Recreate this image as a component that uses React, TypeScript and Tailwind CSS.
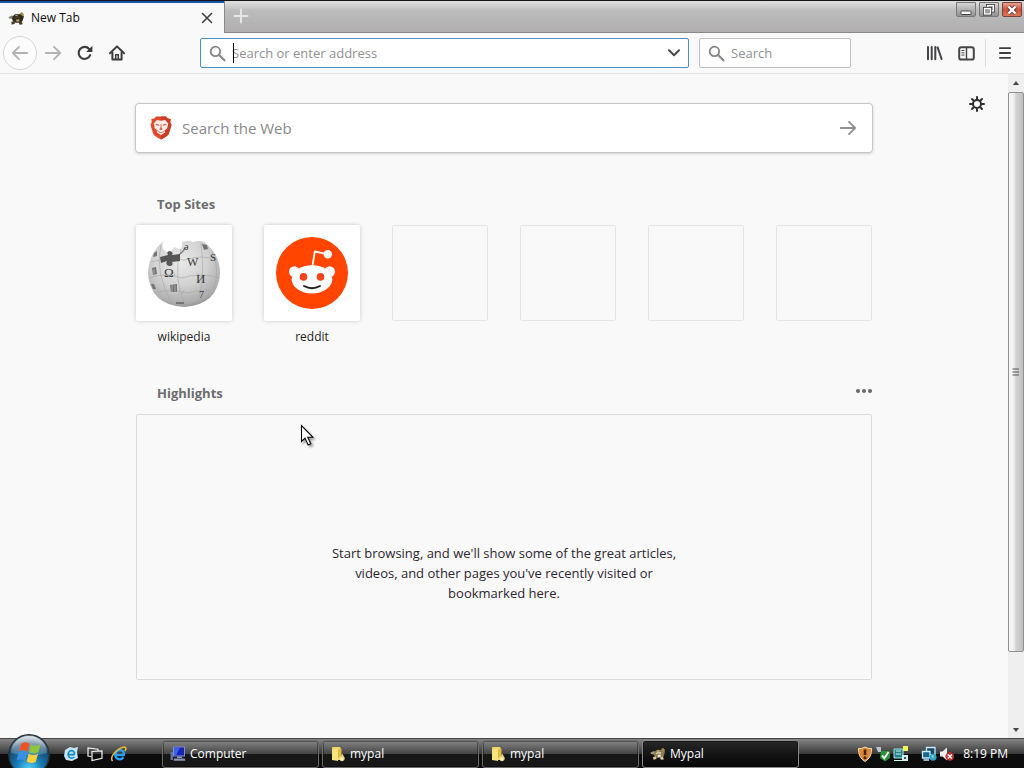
import React from "react";

const EMPTY_SITES = ["slot-3", "slot-4", "slot-5", "slot-6"];

function MypalIcon({ className, light = false }: { className: string; light?: boolean }) {
  const body = light ? "#d8cba4" : "#4a3f22";
  const shell = light ? "#8b7c58" : "#2b2a1c";
  return (
    <svg className={className} viewBox="0 0 16 14" aria-hidden="true">
      <path d="M0.5 5.5 L4 4 L6 6 L4 7.5 L1 7 Z" fill={light ? "#a89a78" : "#7d8b6d"} />
      <path d="M4 6 Q6 2 10 3 Q14 2 15 5 L13.5 9.5 Q10 12 6 10.5 Q3.5 9 4 6Z" fill={shell} />
      <path d="M5.5 6.5 Q8 3.5 11.5 5.5 L10.5 7 Q8 5.8 6.8 7.4Z" fill={body} />
      <path d="M11 2.5 L13 0.8 L15 3 L14 5 Z" fill="#a08a45" />
      <path d="M7.6 8 L10.5 7.6 L11 9.6 L8 10Z" fill={light ? "#f3edd6" : "#b7a568"} />
      <path d="M3 10 L6 9.5 L6.5 12 L3.5 12.8Z M10 10.5 L13 9.5 L13.8 12.4 L10.8 12.8Z" fill={body} />
      <path d="M7 4.2 L9.2 3.8" stroke="#e6dcae" strokeWidth="0.8" />
    </svg>
  );
}

function Magnifier({ className }: { className: string }) {
  return (
    <svg className={className} viewBox="0 0 18 18" fill="none" stroke="currentColor" aria-hidden="true">
      <circle cx="6.8" cy="6.8" r="5" strokeWidth="1.9" />
      <path d="M10.6 10.6 L16.4 16.2" strokeWidth="2.2" strokeLinecap="round" />
    </svg>
  );
}

function Arrow({ className, flip = false }: { className: string; flip?: boolean }) {
  return (
    <svg className={className} viewBox="0 0 18 16" fill="none" stroke="currentColor" strokeWidth="1.9" strokeLinecap="round" strokeLinejoin="round" aria-hidden="true">
      {flip ? <path d="M16.2 8 H2 M8 1.8 L1.8 8 L8 14.2" /> : <path d="M1.8 8 H16 M10 1.8 L16.2 8 L10 14.2" />}
    </svg>
  );
}

function TabStrip() {
  return (
    <header className="flex h-[33px] border-t border-[#141414] bg-linear-to-b from-[#dcdcdc] from-5% via-[#bcbcbc] via-30% to-[#b0aeae]">
      <div className="flex w-56 items-center border-t-2 border-[#1b56a8] bg-[#f9f9fa] pr-[7px] pl-2">
        <MypalIcon className="h-[15px] w-[17px]" />
        <span className="ml-1.5 flex-1 text-xs text-[#0c0c0d]">New Tab</span>
        <button aria-label="Close tab" className="flex size-5 items-center justify-center text-[#3c3c3c]">
          <svg className="size-3" viewBox="0 0 12 12" stroke="currentColor" strokeWidth="1.5" strokeLinecap="round" aria-hidden="true">
            <path d="M1.5 1.5 L10.5 10.5 M10.5 1.5 L1.5 10.5" />
          </svg>
        </button>
      </div>
      <div className="flex flex-1 justify-between border-b border-l border-b-[#8a8888] border-l-[#8a8888]">
        <button aria-label="Open a new tab" className="flex h-[30px] w-8 items-center justify-center text-[#e6e6e6]">
          <svg className="size-4" viewBox="0 0 16 16" stroke="currentColor" strokeWidth="2" strokeLinecap="round" aria-hidden="true">
            <path d="M8 1.5 V14.5 M1.5 8 H14.5" />
          </svg>
        </button>
        <div className="flex gap-[3px] pt-px pr-0.5">
          <button aria-label="Minimize" className="flex h-[15px] w-5 items-center justify-center rounded-b-xs border border-[#777] bg-linear-to-b from-[#d5d5d5] to-[#929292]">
            <svg className="h-3 w-4" viewBox="0 0 16 12" aria-hidden="true">
              <rect x="3" y="7" width="10" height="3.5" rx="0.6" fill="#fff" stroke="#454545" />
            </svg>
          </button>
          <button aria-label="Restore" className="flex h-[15px] w-5 items-center justify-center rounded-b-xs border border-[#777] bg-linear-to-b from-[#d5d5d5] to-[#929292]">
            <svg className="h-3 w-4" viewBox="0 0 16 12" fill="#999" aria-hidden="true">
              <rect x="6.5" y="1.5" width="6" height="5.5" stroke="#3f3f3f" strokeWidth="3" />
              <rect x="6.5" y="1.5" width="6" height="5.5" stroke="#fff" strokeWidth="1.3" />
              <rect x="3.5" y="4.5" width="6" height="5.5" stroke="#3f3f3f" strokeWidth="3" />
              <rect x="3.5" y="4.5" width="6" height="5.5" stroke="#fff" strokeWidth="1.3" />
            </svg>
          </button>
          <button aria-label="Close" className="flex h-[15px] w-5 items-center justify-center rounded-b-xs border border-[#7d4038] bg-linear-to-b from-[#e5a294] via-[#cf4f38] via-50% to-[#d9765c]">
            <svg className="h-3 w-4" viewBox="0 0 16 12" aria-hidden="true">
              <path d="M4.5 2.5 L11.5 9.5 M11.5 2.5 L4.5 9.5" stroke="#5d3b38" strokeWidth="4" />
              <path d="M4.5 2.5 L11.5 9.5 M11.5 2.5 L4.5 9.5" stroke="#fff" strokeWidth="2.4" />
            </svg>
          </button>
        </div>
      </div>
    </header>
  );
}

function NavBar() {
  return (
    <nav className="flex h-[41px] items-center border-b border-[#e3e3e5] bg-[#f9f9fa]">
      <button aria-label="Back" className="ml-[3px] flex size-[34px] items-center justify-center rounded-full border border-[#d5d5d7] bg-[#fcfcfc] text-[#b3b3b5]">
        <Arrow flip className="h-4 w-[18px]" />
      </button>
      <button aria-label="Forward" className="flex size-8 items-center justify-center text-[#b3b3b5]">
        <Arrow className="h-4 w-[18px]" />
      </button>
      <button aria-label="Reload" className="flex size-8 items-center justify-center text-[#3d3d40]">
        <svg className="size-4" viewBox="0 0 16 16" fill="none" aria-hidden="true">
          <path d="M13.2 10.2 A6 6 0 1 1 12.2 4" stroke="currentColor" strokeWidth="2.1" strokeLinecap="round" />
          <path d="M15.4 0.8 V6.4 Q15.4 7 14.8 7 H9.2 Z" fill="currentColor" />
        </svg>
      </button>
      <button aria-label="Home" className="flex size-8 items-center justify-center text-[#3d3d40]">
        <svg className="size-4" viewBox="0 0 16 16" fill="none" stroke="currentColor" strokeWidth="2" strokeLinecap="round" strokeLinejoin="round" aria-hidden="true">
          <path d="M1 8.2 L8 1.4 L15 8.2" />
          <path d="M3.4 7.5 V14.6 H12.6 V7.5" />
          <path d="M6.7 14 V9.7 H9.3 V14" strokeWidth="1.5" />
        </svg>
      </button>
      <div className="ml-[67px] flex h-[30px] flex-1 items-center rounded-xs border border-[#4a90c8] bg-white">
        <Magnifier className="ml-2 size-[17px] text-[#858585]" />
        <div className="relative ml-1.5 flex h-full flex-1 items-center">
          <span className="absolute top-1 left-px h-5 w-px bg-black" aria-hidden="true" />
          <input aria-label="Search or enter address" placeholder="Search or enter address" className="w-full bg-transparent pt-0.5 text-[13px] outline-none placeholder:text-[#8f8f92]" />
        </div>
        <button aria-label="Show history" className="flex h-full w-7 items-center justify-center text-[#4a4a4c]">
          <svg className="h-2 w-3" viewBox="0 0 12 8" fill="none" stroke="currentColor" strokeWidth="2" strokeLinecap="round" strokeLinejoin="round" aria-hidden="true">
            <path d="M1 1.3 L6 6.3 L11 1.3" />
          </svg>
        </button>
      </div>
      <div className="mr-[67px] ml-2.5 flex h-[30px] w-38 items-center rounded-xs border border-[#bebec0] bg-white">
        <Magnifier className="ml-2 size-[17px] text-[#858585]" />
        <input aria-label="Search" placeholder="Search" className="ml-1.5 min-w-0 flex-1 bg-transparent pt-0.5 text-[13px] outline-none placeholder:text-[#8f8f92]" />
      </div>
      <button aria-label="Library" className="flex size-8 items-center justify-center text-[#454548]">
        <svg className="h-4 w-[17px]" viewBox="0 0 17 16" fill="none" stroke="currentColor" strokeWidth="2" strokeLinecap="round" aria-hidden="true">
          <path d="M2 2 V14.3 M5.7 2 V14.3 M9.3 2 V14.3 M11.6 2.4 L15.6 14" />
        </svg>
      </button>
      <button aria-label="Sidebars" className="flex size-8 items-center justify-center text-[#454548]">
        <svg className="h-[15px] w-[17px]" viewBox="0 0 17 15" fill="none" stroke="currentColor" strokeLinecap="round" aria-hidden="true">
          <rect x="1.2" y="1.2" width="14.6" height="12.4" rx="2.2" strokeWidth="2" />
          <path d="M8.5 1.5 V13.5" strokeWidth="1.4" />
          <path d="M3.8 4.5 H6 M3.8 6.8 H6 M3.8 9 H6" strokeWidth="1.1" />
        </svg>
      </button>
      <div className="ml-[3px] h-7 w-px bg-[#dcdcde]" />
      <button aria-label="Open menu" className="flex h-8 w-[38px] items-center justify-center text-[#3d3d40]">
        <svg className="size-3" viewBox="0 0 12 12" stroke="currentColor" strokeWidth="1.8" strokeLinecap="round" aria-hidden="true">
          <path d="M0.9 1.2 H11.1 M0.9 6 H11.1 M0.9 10.8 H11.1" />
        </svg>
      </button>
    </nav>
  );
}

function BraveIcon() {
  return (
    <svg className="h-6 w-[22px]" viewBox="0 0 20 24" preserveAspectRatio="none" aria-hidden="true">
      <path d="M5.5 0.5 H14.5 L16.2 2.4 L18.8 3 L18.4 6.3 L19.5 9 L17 18.3 Q15.8 20.3 10 23.6 Q4.2 20.3 3 18.3 L0.5 9 L1.6 6.3 L1.2 3 L3.8 2.4Z" fill="#e2492a" />
      <path d="M10 0.5 H14.5 L16.2 2.4 L18.8 3 L18.4 6.3 L19.5 9 L17 18.3 Q15.8 20.3 10 23.6Z" fill="#cc3d27" />
      <path d="M6.2 4 L10 4.7 L13.8 4 L16.6 7.4 L15.6 12.6 L13 14.6 L13.8 16.6 L10 19 L6.2 16.6 L7 14.6 L4.4 12.6 L3.4 7.4Z" fill="#ffeee8" />
      <path d="M4.8 7.7 L8.4 8.5 L8 9.7 L5.3 9Z M15.2 7.7 L11.6 8.5 L12 9.7 L14.7 9Z M8.2 13 L10 14.2 L11.8 13 L10.6 12.2 L10.3 8 H9.7 L9.4 12.2Z" fill="#c9604c" />
      <path d="M7.4 15.5 L10 16.8 L12.6 15.5" fill="none" stroke="#b66b5c" strokeWidth="0.8" />
    </svg>
  );
}

function WikipediaLogo() {
  return (
    <svg className="size-[76px]" viewBox="0 0 76 76" aria-hidden="true">
      <defs>
        <radialGradient id="globe" cx="0.45" cy="0.3" r="0.75">
          <stop offset="0" stopColor="#e9e9e9" />
          <stop offset="0.5" stopColor="#d2d2d2" />
          <stop offset="0.85" stopColor="#adadad" />
          <stop offset="1" stopColor="#848484" />
        </radialGradient>
      </defs>
      <path d="M18 6 Q14 12 19 16 Q25 19 28 12 L33 14 Q37 14 36 7 Q43 5 47 7 Q53 5 58 7 Q74 19 74 38 Q72 70 38 72 Q4 70 2 38 Q3 17 18 6Z" fill="url(#globe)" />
      <g fill="none" stroke="#a5a5a5" strokeWidth="0.6">
        <path d="M15 10 Q8 38 27 70 M35 14 Q26 43 40 72 M55 8 Q60 44 51 70 M66 17 Q75 37 67 55" />
        <path d="M5 27 Q22 22 38 25 Q58 19 71 25 M2 43 Q20 37 35 43 Q55 37 74 43 M8 58 Q26 53 42 58 Q58 54 68 56" />
        <path d="M24 39 q4 -4 5 2 M57 40 q-4 4 -5 -2 M33 57 q4 4 5 -2" />
      </g>
      <path d="M14 22 L22 20 Q20 16 24 16 Q28 17 26 20 L34 19 L34 26 L26 27 Q28 31 23 31 Q19 30 21 26 L15 28Z" fill="#555" />
      <path d="M34 19 Q38 16 39 13" fill="none" stroke="#777" strokeWidth="1.5" />
      <g fill="#3a3a3a" fontFamily="Liberation Serif, serif" fontSize="13">
        <text x="18" y="42">Ω</text>
        <text x="41" y="31" fontSize="12">W</text>
        <text x="50" y="48" fontSize="13">И</text>
        <text x="64" y="26" fontSize="11">S</text>
        <text x="53" y="63" fontSize="10">7</text>
        <text x="38" y="15" fontSize="10">ə</text>
      </g>
      <path d="M24 50 l7 -1 v8 h-6Z M56 9 l5 1 1 4 -4 1Z M6 33 l4 -1 1 7 -4 1Z M30 67 h8 v2 h-8Z M5 49 l3 0 2 5 -3 0Z M8 18 l3 -2 0 5 -4 1Z" fill="#747474" />
      <path d="M26 50 v7 M29 50 v7 M8 34 v5" stroke="#bbb" strokeWidth="0.7" />
    </svg>
  );
}

function RedditLogo() {
  return (
    <svg className="size-[72px]" viewBox="0 0 72 72" aria-hidden="true">
      <circle cx="36" cy="36" r="36" fill="#ff4500" />
      <path d="M36.5 29 L38.8 14.5 L50 16.8" fill="none" stroke="#fff" strokeWidth="1.8" strokeLinejoin="round" />
      <circle cx="51.8" cy="17.3" r="4.2" fill="#fff" />
      <circle cx="18.4" cy="34.6" r="5.4" fill="#fff" />
      <circle cx="53.6" cy="34.6" r="5.4" fill="#fff" />
      <ellipse cx="36" cy="42.4" rx="20.3" ry="14.1" fill="#fff" />
      <circle cx="27.5" cy="39.9" r="3.8" fill="#f4431b" />
      <circle cx="44.5" cy="39.9" r="3.8" fill="#f4431b" />
      <path d="M28 49 Q36 53.6 44 49" fill="none" stroke="#202020" strokeWidth="2" strokeLinecap="round" />
    </svg>
  );
}

function SiteTile({ name, children }: { name: string; children: React.ReactNode }) {
  return (
    <a href={"#" + name} className="flex w-24 flex-col items-center">
      <span className="flex size-24 items-center justify-center rounded-xs bg-white shadow-[0_0_4px_rgba(0,0,0,0.2)]">{children}</span>
      <span className="mt-2 text-xs leading-4 text-[#1d1d20]">{name}</span>
    </a>
  );
}

function Cursor() {
  return (
    <svg className="pointer-events-none absolute top-[9px] left-[163px] h-6 w-4 drop-shadow-[2px_2px_1px_rgba(0,0,0,0.35)]" viewBox="0 0 16 24" aria-hidden="true">
      <path d="M1.5 1.5 V17.5 L5 14.2 L8.2 21 L10.8 19.8 L7.8 13.2 H12.8Z" fill="#fff" stroke="#000" strokeWidth="1.1" />
    </svg>
  );
}

function NewTabPage() {
  return (
    <main className="relative flex-1 pt-[29px]">
      <button aria-label="Customize your New Tab page" className="absolute top-5 right-[21px] flex size-5 items-center justify-center text-[#303033]">
        <svg className="size-4" viewBox="0 0 16 16" fill="none" stroke="currentColor" strokeLinecap="round" aria-hidden="true">
          <circle cx="8" cy="8" r="4" strokeWidth="2" />
          <path d="M8 1 V3.5 M8 12.5 V15 M1 8 H3.5 M12.5 8 H15 M3 3 L4.8 4.8 M11.2 11.2 L13 13 M3 13 L4.8 11.2 M11.2 4.8 L13 3" strokeWidth="2" />
        </svg>
      </button>
      <div className="mx-auto w-[736px]">
        <form className="-mx-px flex h-[50px] items-center rounded-sm border border-[#c6c6c8] bg-white shadow-[0_1px_3px_rgba(0,0,0,0.16)]" onSubmit={(e) => e.preventDefault()}>
          <span className="ml-3.5"><BraveIcon /></span>
          <input aria-label="Search the Web" placeholder="Search the Web" className="ml-2.5 flex-1 bg-transparent text-[15px] outline-none placeholder:text-[#8a8a8d]" />
          <button aria-label="Search" className="flex h-full w-12 items-center justify-center text-[#929294]">
            <Arrow className="h-4 w-[18px]" />
          </button>
        </form>
        <section className="mt-[41px]">
          <h2 className="pl-[21px] text-[13px] leading-5 font-bold text-[#6c6c6e]">Top Sites</h2>
          <div className="mt-[11px] flex justify-between">
            <SiteTile name="wikipedia"><WikipediaLogo /></SiteTile>
            <SiteTile name="reddit"><RedditLogo /></SiteTile>
            {EMPTY_SITES.map((slot) => (
              <div key={slot} className="size-24 rounded-xs border border-[#e4e4e6]" />
            ))}
          </div>
        </section>
        <section className="mt-[38px]">
          <div className="flex items-center justify-between pl-[21px]">
            <h2 className="text-[13px] leading-5 font-bold text-[#6c6c6e]">Highlights</h2>
            <button aria-label="Open section menu" className="-mt-1 text-[#68686b]">
              <svg className="h-4 w-4" viewBox="0 0 16 16" fill="currentColor" aria-hidden="true">
                <circle cx="2" cy="8" r="2" /><circle cx="8" cy="8" r="2" /><circle cx="14" cy="8" r="2" />
              </svg>
            </button>
          </div>
          <div className="relative mt-[11px] flex h-[266px] justify-center rounded-xs border border-[#dcdcde] pt-32">
            <Cursor />
            <p className="w-[350px] text-center text-[13px] leading-5 text-[#2d2530]">
              Start browsing, and we'll show some of the great articles, videos, and other pages you've recently visited or bookmarked here.
            </p>
          </div>
        </section>
      </div>
    </main>
  );
}

function ScrollBar() {
  return (
    <div className="flex w-4 flex-col bg-[#efefef]" aria-hidden="true">
      <span className="flex h-[18px] items-center justify-center">
        <svg className="h-1 w-1.5" viewBox="0 0 6 4"><path d="M0 4 L3 0 L6 4Z" fill="#444" /></svg>
      </span>
      <div className="flex grow-[561] items-center justify-center rounded-xs border border-[#919191] bg-linear-to-r from-[#f4f4f4] from-30% via-[#d2d2d2] via-50% to-[#c0c0c0]">
        <svg className="h-2 w-2" viewBox="0 0 8 8" stroke="#555" strokeWidth="1.2"><path d="M0.5 1 H7 M0.5 4 H7 M0.5 7 H7" /></svg>
      </div>
      <div className="grow-[70]" />
      <span className="flex h-[17px] items-center justify-center">
        <svg className="h-1 w-1.5" viewBox="0 0 6 4"><path d="M0 0 L3 4 L6 0Z" fill="#444" /></svg>
      </span>
    </div>
  );
}

function StartOrb() {
  return (
    <svg className="size-[42px]" viewBox="0 0 42 42" aria-hidden="true">
      <defs>
        <radialGradient id="orb" cx="0.5" cy="0.85" r="0.85">
          <stop offset="0" stopColor="#50d6f4" />
          <stop offset="0.4" stopColor="#1676b2" />
          <stop offset="0.75" stopColor="#174466" />
          <stop offset="1" stopColor="#9db2bf" />
        </radialGradient>
        <linearGradient id="gloss" x1="0" y1="0" x2="0" y2="1">
          <stop offset="0" stopColor="#fff" stopOpacity="0.7" />
          <stop offset="1" stopColor="#fff" stopOpacity="0.15" />
        </linearGradient>
      </defs>
      <circle cx="21" cy="21" r="20.2" fill="url(#orb)" stroke="#27343d" strokeWidth="1.4" />
      <path d="M3 19 A18 17 0 0 1 39 19 Q21 24 3 19Z" fill="url(#gloss)" />
      <path d="M13.5 9.4 Q17.6 6.8 21.4 9.8 L19.6 17.4 Q15.4 15 11 17Z" fill="#ee5128" />
      <path d="M22.8 10.4 Q27 13.2 32.6 10.2 L30.4 18.2 Q25.6 20.8 21 18.2Z" fill="#8fc43f" />
      <path d="M10.6 18.5 Q15 16.5 19.2 18.9 L17.2 26.7 Q13 24.3 8.6 26.3Z" fill="#3a8fe0" />
      <path d="M20.6 19.7 Q25.2 22.2 30 19.7 L27.8 27.7 Q23 30.2 18.6 27.5Z" fill="#fbcf3c" />
    </svg>
  );
}

function FolderIcon() {
  return (
    <svg className="size-4" viewBox="0 0 16 16" aria-hidden="true">
      <path d="M2 2 Q2 1 3 1 H10 L11 3 V14 H2Z" fill="#f4d665" />
      <path d="M2 4 L8 2.5 V15 L2 14Z" fill="#fae27e" />
      <path d="M8 3 H11.5 V10 L8 12Z" fill="#e2ba42" />
      <path d="M12.3 7.5 L14.8 12 Q14.6 15.3 11.6 15.3 Q8.8 14.5 10.2 11.5Z" fill="#e6cf83" />
      <circle cx="11.8" cy="12.8" r="1.6" fill="#fff3bd" />
    </svg>
  );
}

function ComputerIcon() {
  return (
    <svg className="size-4" viewBox="0 0 16 16" aria-hidden="true">
      <path d="M3 0.5 H15 V10.5 H3Z" fill="#8391cf" />
      <path d="M4 1.5 H14 V9.5 H4Z" fill="#1524b4" />
      <path d="M4 1.5 H10 L6 9.5 H4Z" fill="#3f61e8" />
      <path d="M0.5 6 H3 V14 H0.5Z" fill="#63719b" />
      <path d="M7 10.5 H12 V12 H7Z M4 12.5 H14.5 L15.5 14.8 H3.5Z" fill="#8a98b8" />
    </svg>
  );
}

function TaskButton({ label, active = false, children }: { label: string; active?: boolean; children: React.ReactNode }) {
  const tone = active
    ? "border-[#8c8c8c] bg-linear-to-b from-[#272727] to-[#060606]"
    : "border-[#6d6d6d] bg-linear-to-b from-[#858585] via-[#444444] via-50% to-[#171717] to-52%";
  return (
    <button className={"flex h-7 max-w-[157px] flex-1 items-center gap-1 rounded-[3px] border pl-[7px] text-xs text-white shadow-[inset_0_0_0_1px_rgba(0,0,0,0.35)] " + tone}>
      {children}
      <span>{label}</span>
    </button>
  );
}

function Taskbar() {
  return (
    <footer className="flex h-[30px] items-center border-t border-[#454545] bg-linear-to-b from-[#858585] via-[#3b3b3b] via-50% to-[#0c0c0c] to-52%">
      <button aria-label="Start" className="relative h-full w-[60px] overflow-visible">
        <span className="absolute -top-[5px] left-2 h-[34px] overflow-hidden"><StartOrb /></span>
      </button>
      <div className="flex w-[102px] items-center gap-2 pl-[3px]">
        <button aria-label="Internet browser shortcut">
          <svg className="size-4" viewBox="0 0 16 16" aria-hidden="true">
            <path d="M2 4 L7 1 L11 2 L15 1 L14 6 L15 12 L9 15 L3 14 L1 10Z" fill="#c4e7f8" />
            <path d="M11.4 11 Q8.5 13.4 6 11 Q4 8 6.4 5.5 Q9.2 3.5 11.5 6.5 L11 8.6 H6" fill="none" stroke="#168ac7" strokeWidth="1.6" />
          </svg>
        </button>
        <button aria-label="Switch between windows">
          <svg className="size-4" viewBox="0 0 16 16" fill="none" stroke="#f1f1f1" strokeWidth="1.2" aria-hidden="true">
            <path d="M4.5 10.5 L1 10 V2 L11 3.2 V5" />
            <path d="M5 5.5 L15 4.8 V12.3 L5 14.5Z" />
          </svg>
        </button>
        <button aria-label="Internet Explorer">
          <svg className="size-4" viewBox="0 0 16 16" fill="none" aria-hidden="true">
            <path d="M12.5 11.2 Q9.5 14.8 5.7 12.3 Q2.8 9 5.6 5.4 Q9 2.6 12 5.3 Q13.4 7 12.7 9 H5.5" stroke="#2a9ff0" strokeWidth="2.4" />
            <path d="M1.5 15 Q-1.5 11 6 4.5 Q13 -0.5 14.6 1.6 Q15.4 3 14 5" stroke="#eebd35" strokeWidth="1.5" />
          </svg>
        </button>
      </div>
      <div className="flex flex-1 gap-[3px]">
        <TaskButton label="Computer"><ComputerIcon /></TaskButton>
        <TaskButton label="mypal"><FolderIcon /></TaskButton>
        <TaskButton label="mypal"><FolderIcon /></TaskButton>
        <TaskButton label="Mypal" active><MypalIcon light className="h-3.5 w-4" /></TaskButton>
      </div>
      <div className="flex w-[167px] items-center pr-4">
        <svg className="size-4" viewBox="0 0 16 16" aria-hidden="true">
          <path d="M8 1 Q11 3 14.5 2.5 Q15 11.5 8 15.5 Q1 11.5 1.5 2.5 Q5 3 8 1Z" fill="#d98739" stroke="#ffdda5" />
          <path d="M8 3.5 V9" stroke="#44200e" strokeWidth="2.6" /><circle cx="8" cy="11.7" r="1.5" fill="#44200e" />
        </svg>
        <svg className="ml-0.5 size-4" viewBox="0 0 16 16" aria-hidden="true">
          <path d="M1 1 H6 V6 H3Z" fill="#bcc5ce" />
          <path d="M6 5 L15 5 L15 12 L10 15.5 L5 12Z" fill="#279338" />
          <path d="M7 9.5 L9.3 12.3 L13.5 6" fill="none" stroke="#fff" strokeWidth="1.8" />
        </svg>
        <svg className="ml-0.5 size-4" viewBox="0 0 16 16" aria-hidden="true">
          <path d="M1 3 H10 V12 H1Z" fill="#287f8e" stroke="#9cebe8" />
          <path d="M3 5 H8 M3 8 H8 M1 14.5 H11" stroke="#caffea" strokeWidth="1.2" />
          <path d="M10 0 H15 V5 H10Z" fill="#eff35c" /><path d="M9 9 H15 V15 H9Z" fill="#d7eeee" /><path d="M11 11 H13 V13 H11Z" fill="#39525d" />
        </svg>
        <svg className="ml-3 size-4" viewBox="0 0 16 16" aria-hidden="true">
          <path d="M5.5 1.5 H14 V9 H5.5Z" fill="#164968" stroke="#c8edf9" strokeWidth="1.3" />
          <path d="M1.5 5.5 H9 V12 H1.5Z" fill="#1c638a" stroke="#c8edf9" strokeWidth="1.3" />
          <path d="M2.5 14 H8" stroke="#c8edf9" strokeWidth="1.5" />
          <circle cx="12" cy="11.3" r="3.5" fill="#2ba2cd" /><path d="M10 10 Q12 8 13 10 L12 13Z" fill="#7cd4a2" />
        </svg>
        <svg className="ml-0.5 size-4" viewBox="0 0 16 16" aria-hidden="true">
          <path d="M1 5.5 H3.5 L8 1.5 V14.5 L3.5 10.5 H1Z" fill="#eeeeee" />
          <circle cx="10.8" cy="10.5" r="4.3" fill="#c52d2d" />
          <path d="M8.8 8.5 L12.8 12.5 M12.8 8.5 L8.8 12.5" stroke="#fff" strokeWidth="1.5" />
        </svg>
        <time className="ml-auto text-xs whitespace-nowrap text-white">8:19 PM</time>
      </div>
    </footer>
  );
}

export default function App() {
  return (
    <div className="flex min-h-screen flex-col bg-[#f9f9fa] font-['Open_Sans','Noto_Sans',sans-serif]">
      <TabStrip />
      <NavBar />
      <div className="flex flex-1">
        <NewTabPage />
        <ScrollBar />
      </div>
      <Taskbar />
    </div>
  );
}
